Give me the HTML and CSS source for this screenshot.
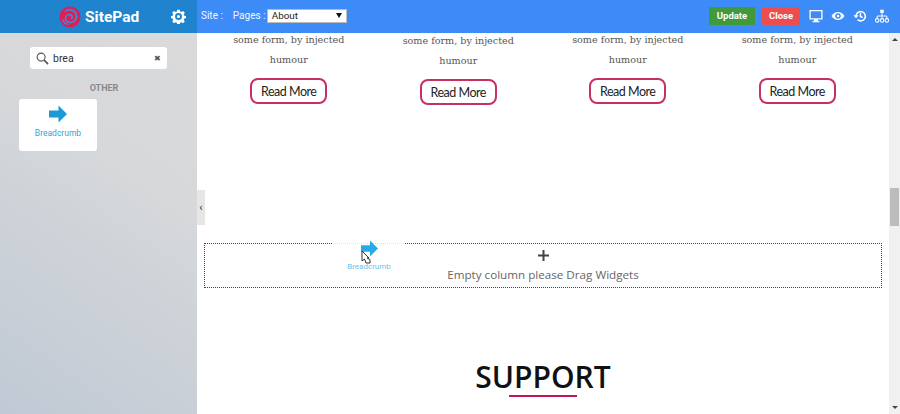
FILE: index.html
```html
<!DOCTYPE html>
<html lang="en">
<head>
<meta charset="utf-8">
<title>SitePad</title>
<link rel="stylesheet" href="styles.css">
</head>
<body>
<div class="app">
  <header class="topbar">
    <div class="brand">
      <svg class="logo" viewBox="0 0 22 22"><circle cx="11" cy="11" r="10.500" fill="#dc1f58"/><path d="M6 5.500C9 2.800 15 3.300 17 7.500c1.800 4-.8 8.500-5 9-3.500.4-6.200-2.200-5.500-5C7.200 9 10.500 7.800 12.500 9.300c1.500 1.200 1 3-.7 3.200" fill="none" stroke="#3a8fd8" stroke-width="1.500"/><path d="M3.500 13c.8 3 3 5 6 5.500" fill="none" stroke="#3a8fd8" stroke-width="1.200"/></svg>
      <span class="brand-name">SitePad</span>
      <svg class="gear" viewBox="0 0 24 24"><path fill="#fff" fill-rule="evenodd" d="M10 1h4l.6 3 2.100.9 2.600-1.700 2.800 2.800-1.700 2.600.9 2.100 3 .6v3.400l-3 .6-.9 2.100 1.700 2.600-2.800 2.800-2.600-1.700-2.100.9-.6 3h-4l-.6-3-2.100-.9-2.600 1.700-2.800-2.800 1.700-2.600-.9-2.100-3-.6v-3.400l3-.6.900-2.100-1.700-2.600 2.800-2.800 2.600 1.700 2.100-.9zM12 6.500a5.500 5.500 0 1 0 0 11 5.500 5.500 0 0 0 0-11zM12 9.500a2.500 2.500 0 1 1 0 5 2.500 2.500 0 0 1 0-5z"/></svg>
    </div>
    <div class="toolbar">
      <span class="label site-label">Site :</span>
      <span class="label pages-label">Pages :</span>
      <div class="select"><span>About</span><i class="caret"></i></div>
      <div class="actions">
        <span class="btn btn-update">Update</span>
        <span class="btn btn-close">Close</span>
        <svg class="tool" viewBox="0 0 16 16"><path fill="#fff" fill-rule="evenodd" d="M.5 1h15v11H.5zM2 2.500v8h12v-8zM6 12h4l.4 1.800H12V15H4v-1.200h1.600z"/></svg>
        <svg class="tool" viewBox="0 0 16 16"><path fill="#fff" fill-rule="evenodd" d="M.5 8C2.500 5 5 3.500 8 3.500S13.500 5 15.500 8c-2 3-4.500 4.500-7.500 4.500S2.500 11 .5 8zM8 4.800a3.200 3.200 0 1 0 0 6.400 3.200 3.200 0 0 0 0-6.400zM8 6.500a1.500 1.500 0 1 1 0 3 1.500 1.500 0 0 1 0-3z"/></svg>
        <svg class="tool" viewBox="0 0 16 16"><path fill="none" stroke="#fff" stroke-width="1.800" d="M3.500 8a5.300 5.300 0 1 1 1.700 4.200M8.500 4.800v3.700l2.500 1.400"/><path fill="#fff" d="M.5 7h6L3.500 10.500z"/></svg>
        <svg class="tool" viewBox="0 0 16 16"><path fill="none" stroke="#fff" stroke-width="1.100" d="M8 4v4M2.500 11V8h11v3M8 8v3"/><path fill="#fff" d="M6 .8h4v3.700H6z"/><circle cx="2.500" cy="13" r="2" fill="none" stroke="#fff" stroke-width="1.200"/><circle cx="8" cy="13" r="2" fill="none" stroke="#fff" stroke-width="1.200"/><circle cx="13.500" cy="13" r="2" fill="none" stroke="#fff" stroke-width="1.200"/></svg>
      </div>
    </div>
  </header>
  <div class="workspace">
    <aside class="sidebar">
      <div class="search">
        <svg class="search-icon" viewBox="0 0 14 14"><circle cx="5.500" cy="5.500" r="4.300" fill="none" stroke="#555" stroke-width="1.200"/><path d="M8.700 8.700l4.300 4.300" stroke="#555" stroke-width="1.800"/></svg>
        <span class="search-text">brea</span>
        <span class="search-clear">✖</span>
      </div>
      <div class="group-title">OTHER</div>
      <div class="widget">
        <svg class="arrow" viewBox="0 0 18 18"><path fill="#1a9ad6" d="M0 5.500h9.500V.500L18 9l-8.500 8.500v-5H0z"/></svg>
        <span class="widget-label">Breadcrumb</span>
      </div>
      <div class="collapse"><span>‹</span></div>
    </aside>
    <main class="editor">
      <div class="canvas">
        <section class="columns">
          <div class="col">
            <p class="copy">some form, by injected</p>
            <p class="copy">humour</p>
            <span class="read-more">Read More</span>
          </div>
          <div class="col col-low">
            <p class="copy">some form, by injected</p>
            <p class="copy">humour</p>
            <span class="read-more">Read More</span>
          </div>
          <div class="col">
            <p class="copy">some form, by injected</p>
            <p class="copy">humour</p>
            <span class="read-more">Read More</span>
          </div>
          <div class="col">
            <p class="copy">some form, by injected</p>
            <p class="copy">humour</p>
            <span class="read-more">Read More</span>
          </div>
        </section>
        <section class="dropzone">
          <svg class="plus" viewBox="0 0 11 11"><path d="M4.500 0h2v4.500H11v2H6.500V11h-2V6.500H0v-2h4.500z" fill="#444"/></svg>
          <span class="drop-text">Empty column please Drag Widgets</span>
        </section>
        <section class="support">
          <h2 class="support-title">SUPPORT</h2>
          <div class="support-rule"></div>
        </section>
      </div>
      <div class="scrollbar">
        <i class="sb-up"></i>
        <div class="sb-track"><div class="sb-thumb"></div></div>
        <i class="sb-down"></i>
      </div>
    </main>
  </div>
  <div class="ghost">
    <svg class="ghost-arrow" viewBox="0 0 18 18"><path fill="#27abe6" d="M0 5.500h9.500V.500L18 9l-8.500 8.500v-5H0z"/></svg>
    <span class="ghost-label">Breadcrumb</span>
  </div>
  <svg class="cursor" viewBox="0 0 11 15"><path d="M1 1v10l2.500-2 1.500 4h4V9.500L6 8h2z" fill="#fff" stroke="#333" stroke-width="1"/></svg>
</div>
</body>
</html>
```
FILE: styles.css
```css
* { box-sizing: border-box; }
html, body { margin: 0; height: 100%; overflow: hidden; }
body { font-family: "Roboto", "Liberation Sans", sans-serif; background: #fff; }
.app { position: relative; width: 900px; height: 414px; display: flex; flex-direction: column; overflow: hidden; }

.topbar { height: 33px; flex: none; display: flex; background: #3d8bf6; color: #fff; }
.brand {
  width: 197px; flex: none; display: flex; align-items: center; padding: 0 0 0 59px;
  background-color: #1f84cd;
  background-image: radial-gradient(#3b94d6 0.6px, transparent 0.7px);
  background-size: 4px 4px;
}
.logo { width: 22px; height: 22px; margin-right: 4px; }
.brand-name { font-size: 15.500px; font-weight: 700; width: 86px; }
.gear { width: 15px; height: 15px; }
.toolbar { flex: 1; display: flex; align-items: center; padding: 0 11px 2px 4px; font-size: 10px; }
.label { color: #f2f6ff; white-space: nowrap; }
.site-label { margin-right: 10px; }
.pages-label { width: 34px; flex: none; }
.select {
  width: 80px; flex: none; height: 14px; padding: 0 4px; background: #fff; border: 1px solid #bbb;
  color: #222; font-size: 9.800px; line-height: 12px; display: flex; align-items: center; justify-content: space-between;
}
.caret { width: 0; height: 0; border: 3px solid transparent; border-top: 5px solid #111; border-bottom: 0; }
.actions { margin-left: auto; display: flex; align-items: center; }
.btn { height: 18px; line-height: 18px; border-radius: 2px; font-size: 9.500px; font-weight: 700; text-align: center; color: #fff; }
.btn-update { width: 46px; background: #3f9a3c; margin-right: 7px; }
.btn-close { width: 38px; background: #ee4d4f; margin-right: 9px; }
.tool { width: 14px; height: 14px; margin-left: 8px; }
.btn-close + .tool { margin-left: 0; }

.workspace { flex: 1; display: flex; min-height: 0; }
.sidebar {
  position: relative; width: 197px; flex: none; padding: 14px 19px 0;
  background: linear-gradient(215deg, #dadadb 0%, #d6d8da 35%, #c0c9d5 100%);
}
.search {
  width: 137px; height: 22px; margin-left: 11px; padding: 0 6px; background: #fff; border-radius: 3px;
  display: flex; align-items: center; font-size: 10.500px; color: #333;
}
.search-icon { width: 13px; height: 13px; margin-right: 4px; }
.search-text { flex: 1; }
.search-clear { font-size: 8px; color: #555; }
.group-title { margin-top: 14px; text-align: center; font-size: 9px; font-weight: 700; color: #8a8a8a; line-height: 11px; padding-left: 11px; }
.widget {
  width: 78px; height: 52px; margin-top: 5px; background: #fff; border-radius: 3px;
  display: flex; flex-direction: column; align-items: center; padding-top: 6px;
}
.arrow { width: 18px; height: 18px; }
.widget-label { margin-top: 5px; font-size: 8.500px; line-height: 11px; color: #38a3d8; }
.collapse {
  position: absolute; right: -8px; top: 157px; width: 8px; height: 35px; background: #e6e6e6;
  display: flex; align-items: center; justify-content: center; color: #333; font-size: 11px; z-index: 2;
}

.editor { flex: 1; display: flex; min-width: 0; }
.canvas { flex: 1; min-width: 0; padding: 0 7px; background: #fff; }
.columns { display: grid; grid-template-columns: repeat(4, 1fr); height: 210px; }
.col { display: flex; flex-direction: column; align-items: center; }
.col-low { padding-top: 1px; }
.copy {
  margin: 0; height: 20px; line-height: 13px; font-family: "DejaVu Serif", "Liberation Serif", serif;
  font-size: 9.600px; color: #555; white-space: nowrap; text-align: center;
}
.read-more {
  margin-top: 5px; width: 77px; height: 26px; line-height: 23px; border: 2px solid #c8305f; border-radius: 8px;
  text-align: center; font-family: "Lato", sans-serif; font-size: 12.500px; letter-spacing: -.5px; color: #222;
}
.dropzone {
  height: 45px; border: 1px dotted #444; display: flex; flex-direction: column; align-items: center; padding-top: 6px;
}
.plus { width: 11px; height: 11px; margin-bottom: 6px; flex: none; }
.drop-text { font-family: "Open Sans", sans-serif; font-size: 11.650px; line-height: 15px; color: #666; }
.support { display: flex; flex-direction: column; align-items: center; padding-top: 71px; }
.support-title { margin: 0; font-family: "Open Sans", sans-serif; font-size: 30px; line-height: 36px; font-weight: 600; color: #111; }
.support-rule { width: 68px; height: 2px; background: #c2185b; }

.scrollbar { width: 11px; flex: none; background: #f0f0f0; display: flex; flex-direction: column; align-items: center; }
.sb-up { margin-top: 5px; width: 0; height: 0; border: 3px solid transparent; border-bottom: 3px solid #444; border-top: 0; }
.sb-track { flex: 1; width: 100%; padding: 147px 0 0 1px; }
.sb-thumb { height: 38px; width: 9px; background: #bcbcbc; }
.sb-down { margin-bottom: 5px; width: 0; height: 0; border: 3px solid transparent; border-top: 3px solid #444; border-bottom: 0; }

.ghost {
  position: absolute; left: 333px; top: 240px; width: 72px; height: 40px; background: rgba(255,255,255,.85);
  display: flex; flex-direction: column; align-items: center;
}
.ghost-arrow { width: 17px; height: 17px; }
.ghost-label { margin-top: 4px; font-size: 8px; line-height: 11px; color: #6cc3ea; }
.cursor { position: absolute; left: 361px; top: 250px; width: 11px; height: 15px; }
```
